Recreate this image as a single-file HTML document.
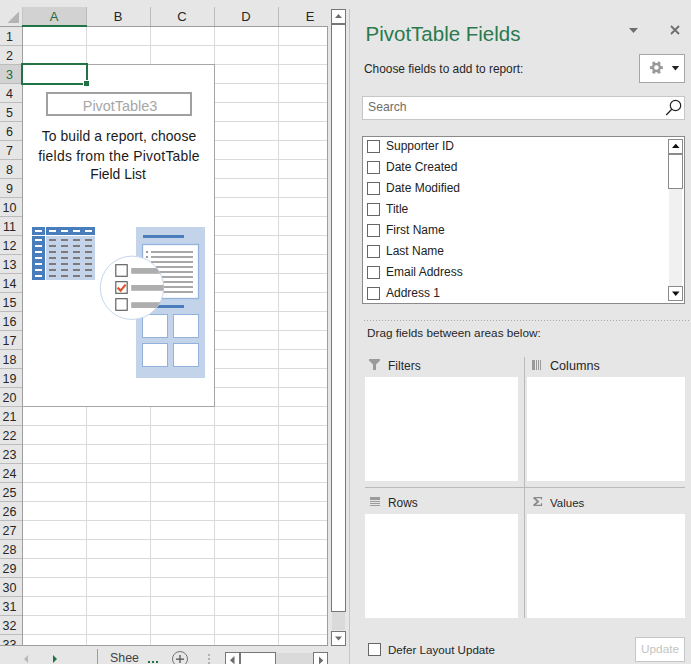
<!DOCTYPE html><html><head><meta charset="utf-8"><style>
html,body{margin:0;padding:0;} body{width:691px;height:664px;overflow:hidden;position:relative;background:#e6e6e6;font-family:"Liberation Sans", sans-serif;}
div{box-sizing:border-box;}
</style></head><body>
<svg style="position:absolute;left:0;top:0" width="22" height="26"><polygon points="7.5,23 19,23 19,11.5" fill="#b4b4b4"/></svg>
<div style="position:absolute;left:23px;top:7px;width:63px;height:19px;background:#d2d2d2;"></div>
<div style="position:absolute;left:0px;top:26px;width:327px;height:1px;background:#9e9e9e;"></div>
<div style="position:absolute;left:86px;top:7px;width:1px;height:19px;background:#bcbcbc;"></div>
<div style="position:absolute;left:150px;top:7px;width:1px;height:19px;background:#bcbcbc;"></div>
<div style="position:absolute;left:214px;top:7px;width:1px;height:19px;background:#bcbcbc;"></div>
<div style="position:absolute;left:278px;top:7px;width:1px;height:19px;background:#bcbcbc;"></div>
<div style="position:absolute;left:22px;top:7px;width:1px;height:19px;background:#c4c4c4;"></div>
<div style="position:absolute;left:22px;top:26px;width:1px;height:619px;background:#9e9e9e;"></div>
<div style="position:absolute;left:22px;top:25px;width:65px;height:2px;background:#217346;"></div>
<div style="position:absolute;left:23px;top:27px;width:304px;height:618px;background:#ffffff;"></div>
<div style="position:absolute;left:0px;top:65px;width:22px;height:18px;background:#d2d2d2;"></div>
<div style="position:absolute;left:0px;top:45px;width:22px;height:1px;background:#bcbcbc;"></div>
<div style="position:absolute;left:23px;top:45px;width:304px;height:1px;background:#dadada;"></div>
<div style="position:absolute;left:0px;top:64px;width:22px;height:1px;background:#bcbcbc;"></div>
<div style="position:absolute;left:23px;top:64px;width:304px;height:1px;background:#dadada;"></div>
<div style="position:absolute;left:0px;top:83px;width:22px;height:1px;background:#bcbcbc;"></div>
<div style="position:absolute;left:23px;top:83px;width:304px;height:1px;background:#dadada;"></div>
<div style="position:absolute;left:0px;top:102px;width:22px;height:1px;background:#bcbcbc;"></div>
<div style="position:absolute;left:23px;top:102px;width:304px;height:1px;background:#dadada;"></div>
<div style="position:absolute;left:0px;top:121px;width:22px;height:1px;background:#bcbcbc;"></div>
<div style="position:absolute;left:23px;top:121px;width:304px;height:1px;background:#dadada;"></div>
<div style="position:absolute;left:0px;top:140px;width:22px;height:1px;background:#bcbcbc;"></div>
<div style="position:absolute;left:23px;top:140px;width:304px;height:1px;background:#dadada;"></div>
<div style="position:absolute;left:0px;top:159px;width:22px;height:1px;background:#bcbcbc;"></div>
<div style="position:absolute;left:23px;top:159px;width:304px;height:1px;background:#dadada;"></div>
<div style="position:absolute;left:0px;top:178px;width:22px;height:1px;background:#bcbcbc;"></div>
<div style="position:absolute;left:23px;top:178px;width:304px;height:1px;background:#dadada;"></div>
<div style="position:absolute;left:0px;top:197px;width:22px;height:1px;background:#bcbcbc;"></div>
<div style="position:absolute;left:23px;top:197px;width:304px;height:1px;background:#dadada;"></div>
<div style="position:absolute;left:0px;top:216px;width:22px;height:1px;background:#bcbcbc;"></div>
<div style="position:absolute;left:23px;top:216px;width:304px;height:1px;background:#dadada;"></div>
<div style="position:absolute;left:0px;top:235px;width:22px;height:1px;background:#bcbcbc;"></div>
<div style="position:absolute;left:23px;top:235px;width:304px;height:1px;background:#dadada;"></div>
<div style="position:absolute;left:0px;top:254px;width:22px;height:1px;background:#bcbcbc;"></div>
<div style="position:absolute;left:23px;top:254px;width:304px;height:1px;background:#dadada;"></div>
<div style="position:absolute;left:0px;top:273px;width:22px;height:1px;background:#bcbcbc;"></div>
<div style="position:absolute;left:23px;top:273px;width:304px;height:1px;background:#dadada;"></div>
<div style="position:absolute;left:0px;top:292px;width:22px;height:1px;background:#bcbcbc;"></div>
<div style="position:absolute;left:23px;top:292px;width:304px;height:1px;background:#dadada;"></div>
<div style="position:absolute;left:0px;top:311px;width:22px;height:1px;background:#bcbcbc;"></div>
<div style="position:absolute;left:23px;top:311px;width:304px;height:1px;background:#dadada;"></div>
<div style="position:absolute;left:0px;top:330px;width:22px;height:1px;background:#bcbcbc;"></div>
<div style="position:absolute;left:23px;top:330px;width:304px;height:1px;background:#dadada;"></div>
<div style="position:absolute;left:0px;top:349px;width:22px;height:1px;background:#bcbcbc;"></div>
<div style="position:absolute;left:23px;top:349px;width:304px;height:1px;background:#dadada;"></div>
<div style="position:absolute;left:0px;top:368px;width:22px;height:1px;background:#bcbcbc;"></div>
<div style="position:absolute;left:23px;top:368px;width:304px;height:1px;background:#dadada;"></div>
<div style="position:absolute;left:0px;top:387px;width:22px;height:1px;background:#bcbcbc;"></div>
<div style="position:absolute;left:23px;top:387px;width:304px;height:1px;background:#dadada;"></div>
<div style="position:absolute;left:0px;top:406px;width:22px;height:1px;background:#bcbcbc;"></div>
<div style="position:absolute;left:23px;top:406px;width:304px;height:1px;background:#dadada;"></div>
<div style="position:absolute;left:0px;top:425px;width:22px;height:1px;background:#bcbcbc;"></div>
<div style="position:absolute;left:23px;top:425px;width:304px;height:1px;background:#dadada;"></div>
<div style="position:absolute;left:0px;top:444px;width:22px;height:1px;background:#bcbcbc;"></div>
<div style="position:absolute;left:23px;top:444px;width:304px;height:1px;background:#dadada;"></div>
<div style="position:absolute;left:0px;top:463px;width:22px;height:1px;background:#bcbcbc;"></div>
<div style="position:absolute;left:23px;top:463px;width:304px;height:1px;background:#dadada;"></div>
<div style="position:absolute;left:0px;top:482px;width:22px;height:1px;background:#bcbcbc;"></div>
<div style="position:absolute;left:23px;top:482px;width:304px;height:1px;background:#dadada;"></div>
<div style="position:absolute;left:0px;top:501px;width:22px;height:1px;background:#bcbcbc;"></div>
<div style="position:absolute;left:23px;top:501px;width:304px;height:1px;background:#dadada;"></div>
<div style="position:absolute;left:0px;top:520px;width:22px;height:1px;background:#bcbcbc;"></div>
<div style="position:absolute;left:23px;top:520px;width:304px;height:1px;background:#dadada;"></div>
<div style="position:absolute;left:0px;top:539px;width:22px;height:1px;background:#bcbcbc;"></div>
<div style="position:absolute;left:23px;top:539px;width:304px;height:1px;background:#dadada;"></div>
<div style="position:absolute;left:0px;top:558px;width:22px;height:1px;background:#bcbcbc;"></div>
<div style="position:absolute;left:23px;top:558px;width:304px;height:1px;background:#dadada;"></div>
<div style="position:absolute;left:0px;top:577px;width:22px;height:1px;background:#bcbcbc;"></div>
<div style="position:absolute;left:23px;top:577px;width:304px;height:1px;background:#dadada;"></div>
<div style="position:absolute;left:0px;top:596px;width:22px;height:1px;background:#bcbcbc;"></div>
<div style="position:absolute;left:23px;top:596px;width:304px;height:1px;background:#dadada;"></div>
<div style="position:absolute;left:0px;top:615px;width:22px;height:1px;background:#bcbcbc;"></div>
<div style="position:absolute;left:23px;top:615px;width:304px;height:1px;background:#dadada;"></div>
<div style="position:absolute;left:0px;top:634px;width:22px;height:1px;background:#bcbcbc;"></div>
<div style="position:absolute;left:23px;top:634px;width:304px;height:1px;background:#dadada;"></div>
<div style="position:absolute;left:86px;top:27px;width:1px;height:618px;background:#dadada;"></div>
<div style="position:absolute;left:150px;top:27px;width:1px;height:618px;background:#dadada;"></div>
<div style="position:absolute;left:214px;top:27px;width:1px;height:618px;background:#dadada;"></div>
<div style="position:absolute;left:278px;top:27px;width:1px;height:618px;background:#dadada;"></div>
<div style="position:absolute;left:327px;top:26px;width:1px;height:620px;background:#9e9e9e;"></div>
<div style="position:absolute;left:0px;top:645px;width:328px;height:1px;background:#9e9e9e;"></div>
<div style="position:absolute;left:34px;top:9px;width:40px;text-align:center;font-size:13px;line-height:15px;color:#1d6b3f">A</div>
<div style="position:absolute;left:98px;top:9px;width:40px;text-align:center;font-size:13px;line-height:15px;color:#262626">B</div>
<div style="position:absolute;left:162px;top:9px;width:40px;text-align:center;font-size:13px;line-height:15px;color:#262626">C</div>
<div style="position:absolute;left:226px;top:9px;width:40px;text-align:center;font-size:13px;line-height:15px;color:#262626">D</div>
<div style="position:absolute;left:290px;top:9px;width:40px;text-align:center;font-size:13px;line-height:15px;color:#262626">E</div>
<div style="position:absolute;left:0;top:0;width:22px;height:645px;overflow:hidden">
<div style="position:absolute;left:0px;top:30px;width:19px;text-align:center;font-size:12.5px;line-height:14px;color:#262626">1</div>
<div style="position:absolute;left:0px;top:49px;width:19px;text-align:center;font-size:12.5px;line-height:14px;color:#262626">2</div>
<div style="position:absolute;left:0px;top:68px;width:19px;text-align:center;font-size:12.5px;line-height:14px;color:#1d6b3f">3</div>
<div style="position:absolute;left:0px;top:87px;width:19px;text-align:center;font-size:12.5px;line-height:14px;color:#262626">4</div>
<div style="position:absolute;left:0px;top:106px;width:19px;text-align:center;font-size:12.5px;line-height:14px;color:#262626">5</div>
<div style="position:absolute;left:0px;top:125px;width:19px;text-align:center;font-size:12.5px;line-height:14px;color:#262626">6</div>
<div style="position:absolute;left:0px;top:144px;width:19px;text-align:center;font-size:12.5px;line-height:14px;color:#262626">7</div>
<div style="position:absolute;left:0px;top:163px;width:19px;text-align:center;font-size:12.5px;line-height:14px;color:#262626">8</div>
<div style="position:absolute;left:0px;top:182px;width:19px;text-align:center;font-size:12.5px;line-height:14px;color:#262626">9</div>
<div style="position:absolute;left:0px;top:201px;width:19px;text-align:center;font-size:12.5px;line-height:14px;color:#262626">10</div>
<div style="position:absolute;left:0px;top:220px;width:19px;text-align:center;font-size:12.5px;line-height:14px;color:#262626">11</div>
<div style="position:absolute;left:0px;top:239px;width:19px;text-align:center;font-size:12.5px;line-height:14px;color:#262626">12</div>
<div style="position:absolute;left:0px;top:258px;width:19px;text-align:center;font-size:12.5px;line-height:14px;color:#262626">13</div>
<div style="position:absolute;left:0px;top:277px;width:19px;text-align:center;font-size:12.5px;line-height:14px;color:#262626">14</div>
<div style="position:absolute;left:0px;top:296px;width:19px;text-align:center;font-size:12.5px;line-height:14px;color:#262626">15</div>
<div style="position:absolute;left:0px;top:315px;width:19px;text-align:center;font-size:12.5px;line-height:14px;color:#262626">16</div>
<div style="position:absolute;left:0px;top:334px;width:19px;text-align:center;font-size:12.5px;line-height:14px;color:#262626">17</div>
<div style="position:absolute;left:0px;top:353px;width:19px;text-align:center;font-size:12.5px;line-height:14px;color:#262626">18</div>
<div style="position:absolute;left:0px;top:372px;width:19px;text-align:center;font-size:12.5px;line-height:14px;color:#262626">19</div>
<div style="position:absolute;left:0px;top:391px;width:19px;text-align:center;font-size:12.5px;line-height:14px;color:#262626">20</div>
<div style="position:absolute;left:0px;top:410px;width:19px;text-align:center;font-size:12.5px;line-height:14px;color:#262626">21</div>
<div style="position:absolute;left:0px;top:429px;width:19px;text-align:center;font-size:12.5px;line-height:14px;color:#262626">22</div>
<div style="position:absolute;left:0px;top:448px;width:19px;text-align:center;font-size:12.5px;line-height:14px;color:#262626">23</div>
<div style="position:absolute;left:0px;top:467px;width:19px;text-align:center;font-size:12.5px;line-height:14px;color:#262626">24</div>
<div style="position:absolute;left:0px;top:486px;width:19px;text-align:center;font-size:12.5px;line-height:14px;color:#262626">25</div>
<div style="position:absolute;left:0px;top:505px;width:19px;text-align:center;font-size:12.5px;line-height:14px;color:#262626">26</div>
<div style="position:absolute;left:0px;top:524px;width:19px;text-align:center;font-size:12.5px;line-height:14px;color:#262626">27</div>
<div style="position:absolute;left:0px;top:543px;width:19px;text-align:center;font-size:12.5px;line-height:14px;color:#262626">28</div>
<div style="position:absolute;left:0px;top:562px;width:19px;text-align:center;font-size:12.5px;line-height:14px;color:#262626">29</div>
<div style="position:absolute;left:0px;top:581px;width:19px;text-align:center;font-size:12.5px;line-height:14px;color:#262626">30</div>
<div style="position:absolute;left:0px;top:600px;width:19px;text-align:center;font-size:12.5px;line-height:14px;color:#262626">31</div>
<div style="position:absolute;left:0px;top:619px;width:19px;text-align:center;font-size:12.5px;line-height:14px;color:#262626">32</div>
<div style="position:absolute;left:0px;top:638px;width:19px;text-align:center;font-size:12.5px;line-height:14px;color:#262626">33</div>
</div>
<div style="position:absolute;left:23px;top:64px;width:192px;height:343px;background:#ffffff;border:1px solid #a6a6a6;border-left:none;"></div>
<div style="position:absolute;left:21px;top:63px;width:67px;height:22px;background:transparent;border:2px solid #217346;"></div>
<div style="position:absolute;left:83px;top:80px;width:7px;height:7px;background:#ffffff;"></div>
<div style="position:absolute;left:84px;top:81px;width:5px;height:5px;background:#217346;"></div>
<div style="position:absolute;left:46px;top:92px;width:146px;height:24px;border:2px solid #a0a0a0;"></div>
<div style="position:absolute;left:46px;top:97.5px;width:146px;text-align:center;font-size:14.4px;line-height:17px;color:#a6a6a6;padding-left:2px">PivotTable3</div>
<div style="position:absolute;left:23px;top:126.5px;width:192px;text-align:center;font-size:13.9px;line-height:19.3px;letter-spacing:0.1px;color:#1a1a1a">To build a report, choose</div>
<div style="position:absolute;left:23px;top:146.8px;width:192px;text-align:center;font-size:13.9px;line-height:19.3px;letter-spacing:0.25px;color:#1a1a1a">fields from the PivotTable</div>
<div style="position:absolute;left:22px;top:164.6px;width:192px;text-align:center;font-size:13.9px;line-height:19.3px;letter-spacing:0px;color:#1a1a1a">Field List</div>
<svg style="position:absolute;left:0;top:0" width="220" height="400"><rect x="32" y="227" width="13" height="8" fill="#4a7dbb"/><rect x="46" y="227" width="49" height="8" fill="#4a7dbb"/><rect x="32" y="236" width="13" height="44" fill="#4a7dbb"/><rect x="46" y="236" width="49" height="44" fill="#c3d4ea"/><rect x="35" y="230" width="7" height="2" fill="#fff"/><rect x="49" y="230" width="7" height="2" fill="#fff"/><rect x="61" y="230" width="7" height="2" fill="#fff"/><rect x="73" y="230" width="7" height="2" fill="#fff"/><rect x="85" y="230" width="7" height="2" fill="#fff"/><rect x="35" y="239" width="7" height="2" fill="#fff"/><rect x="49" y="239" width="7" height="2" fill="#7f7a78"/><rect x="61" y="239" width="7" height="2" fill="#7f7a78"/><rect x="73" y="239" width="7" height="2" fill="#7f7a78"/><rect x="85" y="239" width="7" height="2" fill="#7f7a78"/><rect x="35" y="245" width="7" height="2" fill="#fff"/><rect x="49" y="245" width="7" height="2" fill="#7f7a78"/><rect x="61" y="245" width="7" height="2" fill="#7f7a78"/><rect x="73" y="245" width="7" height="2" fill="#7f7a78"/><rect x="85" y="245" width="7" height="2" fill="#7f7a78"/><rect x="35" y="251" width="7" height="2" fill="#fff"/><rect x="49" y="251" width="7" height="2" fill="#7f7a78"/><rect x="61" y="251" width="7" height="2" fill="#7f7a78"/><rect x="73" y="251" width="7" height="2" fill="#7f7a78"/><rect x="85" y="251" width="7" height="2" fill="#7f7a78"/><rect x="35" y="257" width="7" height="2" fill="#fff"/><rect x="49" y="257" width="7" height="2" fill="#7f7a78"/><rect x="61" y="257" width="7" height="2" fill="#7f7a78"/><rect x="73" y="257" width="7" height="2" fill="#7f7a78"/><rect x="85" y="257" width="7" height="2" fill="#7f7a78"/><rect x="35" y="263" width="7" height="2" fill="#fff"/><rect x="49" y="263" width="7" height="2" fill="#7f7a78"/><rect x="61" y="263" width="7" height="2" fill="#7f7a78"/><rect x="73" y="263" width="7" height="2" fill="#7f7a78"/><rect x="85" y="263" width="7" height="2" fill="#7f7a78"/><rect x="35" y="269" width="7" height="2" fill="#fff"/><rect x="49" y="269" width="7" height="2" fill="#7f7a78"/><rect x="61" y="269" width="7" height="2" fill="#7f7a78"/><rect x="73" y="269" width="7" height="2" fill="#7f7a78"/><rect x="85" y="269" width="7" height="2" fill="#7f7a78"/><rect x="35" y="275" width="7" height="2" fill="#fff"/><rect x="49" y="275" width="7" height="2" fill="#7f7a78"/><rect x="61" y="275" width="7" height="2" fill="#7f7a78"/><rect x="73" y="275" width="7" height="2" fill="#7f7a78"/><rect x="85" y="275" width="7" height="2" fill="#7f7a78"/><rect x="136" y="227" width="69" height="151" fill="#c3d4ea"/><rect x="143" y="235" width="41" height="3" fill="#4a7dbb"/><rect x="142.5" y="244.5" width="56" height="54" fill="#fff" stroke="#94b3dc" stroke-width="1.3"/><rect x="151" y="251" width="42" height="2" fill="#a8a8a8"/><rect x="151" y="256" width="42" height="2" fill="#a8a8a8"/><rect x="151" y="261" width="42" height="2" fill="#a8a8a8"/><rect x="151" y="266" width="42" height="2" fill="#a8a8a8"/><rect x="151" y="271" width="42" height="2" fill="#a8a8a8"/><rect x="151" y="276" width="42" height="2" fill="#a8a8a8"/><rect x="151" y="281" width="42" height="2" fill="#a8a8a8"/><rect x="151" y="286" width="42" height="2" fill="#a8a8a8"/><rect x="151" y="291" width="42" height="2" fill="#a8a8a8"/><rect x="146" y="251" width="2" height="2" fill="#999"/><rect x="146" y="256" width="2" height="2" fill="#999"/><rect x="143" y="305" width="41" height="3" fill="#4a7dbb"/><rect x="142.5" y="314.5" width="25" height="23" fill="#fff" stroke="#92b2dc" stroke-width="1"/><rect x="173.5" y="314.5" width="25" height="23" fill="#fff" stroke="#92b2dc" stroke-width="1"/><rect x="142.5" y="343.5" width="25" height="23" fill="#fff" stroke="#92b2dc" stroke-width="1"/><rect x="173.5" y="343.5" width="25" height="23" fill="#fff" stroke="#92b2dc" stroke-width="1"/><defs><clipPath id="cc"><circle cx="132" cy="287.8" r="31.7"/></clipPath></defs><circle cx="132" cy="287.8" r="31.7" fill="#fff" stroke="#c6d6ea" stroke-width="1"/><g clip-path="url(#cc)"><rect x="131.2" y="268" width="40" height="5.8" fill="#aeaeae"/><rect x="131.2" y="285" width="40" height="5.8" fill="#aeaeae"/><rect x="131.2" y="302.2" width="40" height="5.8" fill="#aeaeae"/></g><rect x="115.8" y="264.7" width="11.4" height="11.6" fill="#fff" stroke="#5c5c5c" stroke-width="1.15"/><rect x="115.8" y="281.7" width="11.4" height="11.6" fill="#fff" stroke="#5c5c5c" stroke-width="1.15"/><rect x="115.8" y="298.7" width="11.4" height="11.6" fill="#fff" stroke="#5c5c5c" stroke-width="1.15"/><polyline points="117.6,287.6 120.6,290.6 125.6,284.6" fill="none" stroke="#d9542b" stroke-width="2.2"/></svg>
<div style="position:absolute;left:331px;top:9px;width:15px;height:15px;background:#fff;border:1px solid #777;"></div>
<svg style="position:absolute;left:331px;top:9px" width="15" height="15"><polygon points="4,9 11,9 7.5,5" fill="#6d6d6d"/></svg>
<div style="position:absolute;left:331px;top:24px;width:15px;height:588px;background:#fff;border:1px solid #777;"></div>
<div style="position:absolute;left:332px;top:612px;width:13px;height:18px;background:#dadada;"></div>
<div style="position:absolute;left:331px;top:631px;width:15px;height:15px;background:#fff;border:1px solid #777;"></div>
<svg style="position:absolute;left:331px;top:631px" width="15" height="15"><polygon points="4,5.5 11,5.5 7.5,9.5" fill="#6d6d6d"/></svg>
<div style="position:absolute;left:349px;top:9px;width:1px;height:655px;background:#c6c6c6;"></div>
<svg style="position:absolute;left:0;top:645px" width="330" height="19">
<polygon points="28,10 24,14 28,18" fill="#b9b9b9"/>
<polygon points="53,10 57,14 53,18" fill="#217346"/>
</svg>
<div style="position:absolute;left:97px;top:649px;width:1px;height:15px;background:#9e9e9e;"></div>
<div style="position:absolute;left:110px;top:651.5px;font-size:12.4px;color:#444;white-space:nowrap;line-height:1;line-height:13px;width:29px;overflow:hidden;">Sheet</div>
<div style="position:absolute;left:147.5px;top:660.5px;width:2.2px;height:2.2px;background:#217346;"></div>
<div style="position:absolute;left:151.5px;top:660.5px;width:2.2px;height:2.2px;background:#217346;"></div>
<div style="position:absolute;left:155.5px;top:660.5px;width:2.2px;height:2.2px;background:#217346;"></div>
<svg style="position:absolute;left:170px;top:650px" width="20" height="14"><circle cx="10" cy="9" r="7.5" fill="none" stroke="#777" stroke-width="1"/><rect x="6" y="8.5" width="8" height="1.3" fill="#555"/><rect x="9.35" y="5" width="1.3" height="8" fill="#555"/></svg>
<div style="position:absolute;left:208px;top:654px;width:2px;height:2px;background:#b0b0b0;"></div>
<div style="position:absolute;left:208px;top:658px;width:2px;height:2px;background:#b0b0b0;"></div>
<div style="position:absolute;left:208px;top:662px;width:2px;height:2px;background:#b0b0b0;"></div>
<div style="position:absolute;left:225px;top:652px;width:15px;height:12px;background:#fff;border:1px solid #777;border-bottom:none;"></div>
<svg style="position:absolute;left:225px;top:652px" width="15" height="12"><polygon points="9.5,4 5,8.2 9.5,12.4" fill="#6a6a6a"/></svg>
<div style="position:absolute;left:240px;top:652px;width:36px;height:12px;background:#fff;border:1px solid #777;border-bottom:none;"></div>
<div style="position:absolute;left:276px;top:653px;width:37px;height:11px;background:#dadada;"></div>
<div style="position:absolute;left:313px;top:652px;width:15px;height:12px;background:#fff;border:1px solid #777;border-bottom:none;"></div>
<svg style="position:absolute;left:313px;top:652px" width="15" height="12"><polygon points="6,4.5 10.2,8.5 6,12.5" fill="#6a6a6a"/></svg>
<div style="position:absolute;left:365.5px;top:21.5px;font-size:20.5px;color:#2a7a4e;white-space:nowrap;line-height:1;line-height:24px;">PivotTable Fields</div>
<svg style="position:absolute;left:625px;top:24px" width="60" height="16"><polygon points="4,4 13,4 8.5,9" fill="#6d6d6d"/><path d="M46,2 L54,10 M54,2 L46,10" stroke="#6d6d6d" stroke-width="1.8"/></svg>
<div style="position:absolute;left:364px;top:61.5px;font-size:11.9px;color:#262626;white-space:nowrap;line-height:1;line-height:14px;">Choose fields to add to report:</div>
<div style="position:absolute;left:639px;top:54px;width:46px;height:29px;background:#fff;border:1px solid #a6a6a6;"></div>
<svg style="position:absolute;left:649px;top:60px" width="15" height="15" viewBox="0 0 15 15"><g fill="#9a9a9a"><circle cx="7.4" cy="7.6" r="4.7"/><rect x="5.9" y="1.2" width="3" height="3" transform="rotate(30 7.4 7.6)"/><rect x="5.9" y="1.2" width="3" height="3" transform="rotate(90 7.4 7.6)"/><rect x="5.9" y="1.2" width="3" height="3" transform="rotate(150 7.4 7.6)"/><rect x="5.9" y="1.2" width="3" height="3" transform="rotate(210 7.4 7.6)"/><rect x="5.9" y="1.2" width="3" height="3" transform="rotate(270 7.4 7.6)"/><rect x="5.9" y="1.2" width="3" height="3" transform="rotate(330 7.4 7.6)"/></g><circle cx="7.4" cy="7.6" r="2.25" fill="#fff"/></svg>
<svg style="position:absolute;left:670px;top:64px" width="12" height="8"><polygon points="1.7,2.1 9.2,2.1 5.45,6.4" fill="#222"/></svg>
<div style="position:absolute;left:362px;top:96px;width:323px;height:24px;background:#fff;border:1px solid #c6c6c6;"></div>
<div style="position:absolute;left:368px;top:101px;font-size:12.2px;color:#6d6d6d;white-space:nowrap;line-height:1;line-height:13px;">Search</div>
<svg style="position:absolute;left:662px;top:97px" width="22" height="22"><circle cx="13.5" cy="8.5" r="5.2" fill="none" stroke="#222" stroke-width="1.2"/><line x1="9.8" y1="12.2" x2="4.2" y2="18" stroke="#222" stroke-width="1.25"/></svg>
<div style="position:absolute;left:362px;top:136px;width:323px;height:168px;background:#fff;border:1px solid #8a8a8a;"></div>
<div style="position:absolute;left:367px;top:140px;width:13px;height:13px;background:#fff;border:1px solid #666;"></div>
<div style="position:absolute;left:386px;top:140.3px;font-size:12px;color:#222;white-space:nowrap;line-height:1;line-height:12px;">Supporter ID</div>
<div style="position:absolute;left:367px;top:161px;width:13px;height:13px;background:#fff;border:1px solid #666;"></div>
<div style="position:absolute;left:386px;top:161.3px;font-size:12px;color:#222;white-space:nowrap;line-height:1;line-height:12px;">Date Created</div>
<div style="position:absolute;left:367px;top:182px;width:13px;height:13px;background:#fff;border:1px solid #666;"></div>
<div style="position:absolute;left:386px;top:182.3px;font-size:12px;color:#222;white-space:nowrap;line-height:1;line-height:12px;">Date Modified</div>
<div style="position:absolute;left:367px;top:203px;width:13px;height:13px;background:#fff;border:1px solid #666;"></div>
<div style="position:absolute;left:386px;top:203.3px;font-size:12px;color:#222;white-space:nowrap;line-height:1;line-height:12px;">Title</div>
<div style="position:absolute;left:367px;top:224px;width:13px;height:13px;background:#fff;border:1px solid #666;"></div>
<div style="position:absolute;left:386px;top:224.3px;font-size:12px;color:#222;white-space:nowrap;line-height:1;line-height:12px;">First Name</div>
<div style="position:absolute;left:367px;top:245px;width:13px;height:13px;background:#fff;border:1px solid #666;"></div>
<div style="position:absolute;left:386px;top:245.3px;font-size:12px;color:#222;white-space:nowrap;line-height:1;line-height:12px;">Last Name</div>
<div style="position:absolute;left:367px;top:266px;width:13px;height:13px;background:#fff;border:1px solid #666;"></div>
<div style="position:absolute;left:386px;top:266.3px;font-size:12px;color:#222;white-space:nowrap;line-height:1;line-height:12px;">Email Address</div>
<div style="position:absolute;left:367px;top:287px;width:13px;height:13px;background:#fff;border:1px solid #666;"></div>
<div style="position:absolute;left:386px;top:287.3px;font-size:12px;color:#222;white-space:nowrap;line-height:1;line-height:12px;">Address 1</div>
<div style="position:absolute;left:668px;top:139px;width:15px;height:15px;background:#fff;border:1px solid #8a8a8a;"></div>
<svg style="position:absolute;left:668px;top:139px" width="15" height="15"><polygon points="4,9 11.5,9 7.75,4.7" fill="#111"/></svg>
<div style="position:absolute;left:668px;top:154px;width:15px;height:35px;background:#fff;border:1px solid #8a8a8a;"></div>
<div style="position:absolute;left:669px;top:189px;width:13px;height:97px;background:#f0f0f0;"></div>
<div style="position:absolute;left:668px;top:286px;width:15px;height:15px;background:#fff;border:1px solid #8a8a8a;"></div>
<svg style="position:absolute;left:668px;top:286px" width="15" height="15"><polygon points="4,5.5 11.5,5.5 7.75,10" fill="#111"/></svg>
<div style="position:absolute;left:364px;top:320px;width:326px;height:1px;background-image:linear-gradient(to right,#a8a8a8 1px,transparent 1px);background-size:3px 1px;"></div>
<div style="position:absolute;left:367px;top:325.5px;font-size:11.75px;color:#262626;white-space:nowrap;line-height:1;line-height:13px;">Drag fields between areas below:</div>
<div style="position:absolute;left:524px;top:357px;width:1px;height:261px;background:#bababa;"></div>
<div style="position:absolute;left:365px;top:487px;width:320px;height:1px;background:#bababa;"></div>
<div style="position:absolute;left:365px;top:377px;width:153px;height:104px;background:#fff;"></div>
<div style="position:absolute;left:527px;top:377px;width:158px;height:104px;background:#fff;"></div>
<div style="position:absolute;left:365px;top:514px;width:153px;height:104px;background:#fff;"></div>
<div style="position:absolute;left:527px;top:514px;width:158px;height:104px;background:#fff;"></div>
<svg style="position:absolute;left:364px;top:354px" width="20" height="20"><polygon points="5,5 16,5 16,6.5 12,10.5 12,16 9,16 9,10.5 5,6.5" fill="#9a9a9a"/></svg>
<div style="position:absolute;left:388px;top:359.5px;font-size:12px;color:#262626;white-space:nowrap;line-height:1;line-height:13px;">Filters</div>
<svg style="position:absolute;left:526px;top:354px" width="20" height="20"><g fill="#9a9a9a"><rect x="6" y="6" width="3" height="10"/><rect x="10" y="6" width="1" height="10"/><rect x="12" y="6" width="1" height="10"/><rect x="14" y="6" width="1" height="10"/></g></svg>
<div style="position:absolute;left:550px;top:360px;font-size:12.6px;color:#262626;white-space:nowrap;line-height:1;line-height:13px;">Columns</div>
<svg style="position:absolute;left:364px;top:492px" width="20" height="20"><g fill="#9a9a9a"><rect x="6" y="5" width="10" height="3"/><rect x="6" y="9" width="10" height="1"/><rect x="6" y="11" width="10" height="1"/><rect x="6" y="13" width="10" height="1"/></g></svg>
<div style="position:absolute;left:388px;top:497px;font-size:11.9px;color:#262626;white-space:nowrap;line-height:1;line-height:13px;">Rows</div>
<svg style="position:absolute;left:528px;top:492px" width="20" height="20"><path d="M13.5,7.5 V5.6 H5.6 H6.2" stroke="#8a8a8a" stroke-width="1.2" fill="none"/><path d="M5.8,5.6 L10,9.6 L5.8,13.5" stroke="#8a8a8a" stroke-width="1.9" fill="none" stroke-linejoin="miter"/><path d="M5.6,13.4 H13.5 V11.2" stroke="#8a8a8a" stroke-width="1.2" fill="none"/></svg>
<div style="position:absolute;left:550px;top:497.2px;font-size:11.5px;color:#262626;white-space:nowrap;line-height:1;line-height:13px;">Values</div>
<div style="position:absolute;left:368px;top:643px;width:13px;height:13px;background:#fff;border:1px solid #666;"></div>
<div style="position:absolute;left:388px;top:643px;font-size:11.6px;color:#262626;white-space:nowrap;line-height:1;line-height:13px;">Defer Layout Update</div>
<div style="position:absolute;left:635px;top:637px;width:50px;height:25px;background:#fff;border:1px solid #c6c6c6;"></div>
<div style="position:absolute;left:641px;top:643px;font-size:11.8px;color:#c4c4c4;white-space:nowrap;line-height:1;line-height:13px;">Update</div>
</body></html>
